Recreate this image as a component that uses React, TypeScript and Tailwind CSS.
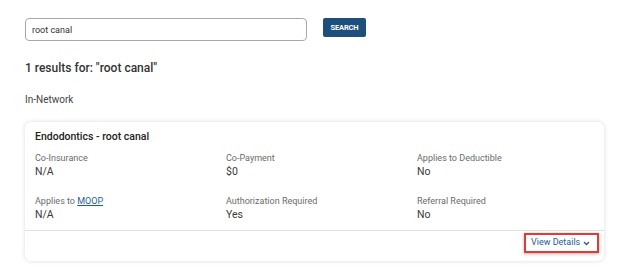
import React, { useState } from "react";

interface FieldProps {
  label: React.ReactNode;
  value: string;
}

const Field: React.FC<FieldProps> = ({ label, value }) => (
  <div className="flex flex-col">
    <span className="text-[9px] leading-[12px] text-[#6b6b6b]">{label}</span>
    <span className="mt-[1px] text-[10.5px] leading-[14px] text-[#3a3a3a]">{value}</span>
  </div>
);

export default function App() {
  const [query, setQuery] = useState("root canal");

  return (
    <div className="min-h-[272px] w-[624px] bg-white px-[25px] pt-[18px] font-['Roboto',sans-serif]">
      {/* Search bar */}
      <div className="flex items-start">
        <input
          type="text"
          value={query}
          onChange={(e) => setQuery(e.target.value)}
          className="h-[23px] w-[282px] rounded-[4px] border border-[#a9a9a9] px-[6px] text-[9px] text-[#333] focus:outline-none"
        />
        <button
          type="button"
          className="ml-[16px] h-[19px] w-[43px] rounded-[2px] bg-[#1d4f7d] text-[7.5px] font-bold tracking-tight text-white"
        >
          SEARCH
        </button>
      </div>

      <div className="mt-[19px] text-[12px] font-medium leading-[16px] text-[#333]">
        1 results for: "root canal"
      </div>

      <div className="mt-[17px] text-[10px] leading-[14px] text-[#444]">In-Network</div>

      {/* Result card */}
      <div className="mt-[15px] w-[579px] rounded-[6px] bg-white shadow-[0_0_4px_rgba(0,0,0,0.15)]">
        <div className="px-[10px] pb-[8px] pt-[8px]">
          <div className="text-[10.5px] font-medium leading-[14px] text-[#222]">
            Endodontics - root canal
          </div>
          <div className="mt-[8px] grid grid-cols-[191px_191px_1fr] gap-y-[16px]">
            <Field label="Co-Insurance" value="N/A" />
            <Field label="Co-Payment" value="$0" />
            <Field label="Applies to Deductible" value="No" />
            <Field
              label={
                <>
                  Applies to <span className="text-[#1a5f9e] underline">MOOP</span>
                </>
              }
              value="N/A"
            />
            <Field label="Authorization Required" value="Yes" />
            <Field label="Referral Required" value="No" />
          </div>
        </div>
        <div className="flex h-[31px] justify-end border-t border-[#e2e2e2] pr-[5px] pt-[2px]">
          <button
            type="button"
            className="flex h-[20px] w-[75px] items-center justify-between border-2 border-[#e53935] pl-[5px] pr-[7px] text-[9px] text-[#2b5d8c] shadow-[0_1px_3px_rgba(0,0,0,0.3)]"
          >
            View Details
            <svg width="7" height="5" viewBox="0 0 7 5" fill="none">
              <path d="M1 1l2.5 2.5L6 1" stroke="#2b5d8c" strokeWidth="1.3" />
            </svg>
          </button>
        </div>
      </div>
    </div>
  );
}
